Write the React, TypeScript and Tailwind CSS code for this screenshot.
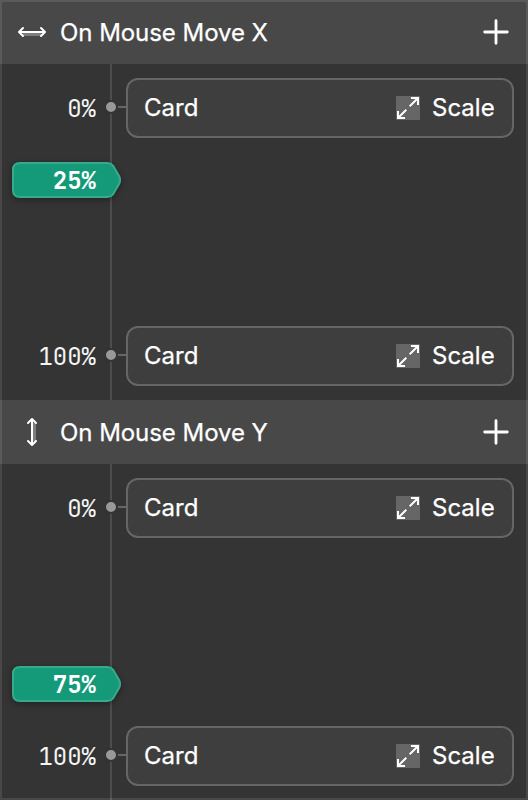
import React from "react";

type Axis = "x" | "y";

const mono = "font-['JetBrains_Mono','Liberation_Mono',monospace]";

function AxisIcon({ axis }: { axis: Axis }) {
  return (
    <svg width="32" height="32" viewBox="0 0 32 32" fill="none">
      {axis === "x" ? (
        <>
          <path d="M7 16h18v4H7z" fill="#7d7d7d" />
          <path d="M3.5 16h25M7 12l-4 4 4 4M25 12l4 4-4 4" stroke="#fff" strokeWidth="2" strokeLinecap="round" strokeLinejoin="round" />
        </>
      ) : (
        <>
          <path d="M16 7v18h4V7z" fill="#7d7d7d" />
          <path d="M16 3.5v25M12 7l4-4 4 4M12 25l4 4 4-4" stroke="#fff" strokeWidth="2" strokeLinecap="round" strokeLinejoin="round" />
        </>
      )}
    </svg>
  );
}

function PlusIcon() {
  return (
    <svg width="28" height="28" viewBox="0 0 28 28" fill="none">
      <path d="M14 2.7v22.6M2.7 14h22.6" stroke="#fff" strokeWidth="2.8" strokeLinecap="round" />
    </svg>
  );
}

function ScaleIcon() {
  return (
    <svg width="24" height="24" viewBox="0 0 24 24" fill="none">
      <rect width="24" height="24" rx="1" fill="#666" />
      <path d="M15 2h7v7M22 2l-8.3 8.3M9 22H2v-7M2 22l8.3-8.3" stroke="#fff" strokeWidth="2" />
    </svg>
  );
}

function Keyframe({ percent }: { percent: string }) {
  return (
    <div className="flex h-15 items-center">
      <div className={`w-24 text-right text-[24px] leading-8 text-[#f5f5f5] ${mono}`}>
        <span className="inline-block translate-y-px">{percent}</span>
      </div>
      <div className="relative ml-2 size-[14px] -translate-y-px rounded-full border-2 border-[#343434] bg-[#999]" />
      <div className="h-0.5 w-2 -translate-y-px bg-[#666]" />
      <div className="flex h-15 w-[388px] items-center rounded-xl border-2 border-[#666] bg-[#3e3e3e] px-4 text-[24px] text-white [-webkit-text-stroke:0.25px_white]">
        <span className="grow">Card</span>
        <ScaleIcon />
        <span className="ml-3 w-[64px]">Scale</span>
      </div>
    </div>
  );
}

function Marker({ percent }: { percent: string }) {
  return (
    <div className="relative ml-3 h-9 w-[109px]">
      <svg width="109" height="36" viewBox="0 0 109 36" fill="none" className="absolute inset-0 drop-shadow-[0_2px_3px_rgba(0,0,0,0.35)]">
        <path
          d="M8 1H95.5C98 1 99.5 1.8 101 3.6L107.2 14.2Q109 18 107.2 21.8L101 32.4C99.5 34.2 98 35 95.5 35H8Q1 35 1 28V8Q1 1 8 1Z"
          fill="#159a79"
          stroke="#37aa8e"
          strokeWidth="2"
        />
      </svg>
      <div className={`relative w-[84px] text-right text-[24px] font-bold leading-9 text-white ${mono}`}>
        <span className="inline-block translate-y-px">{percent}</span>
      </div>
    </div>
  );
}

function Section({ axis, title, marker }: { axis: Axis; title: string; marker: string }) {
  return (
    <section className="h-[400px]">
      <header className="flex h-16 items-center bg-[#484848] pl-4 pr-[18px] text-[24px] text-white">
        <AxisIcon axis={axis} />
        <h2 className="ml-3 grow translate-y-px tracking-[-0.05px] [-webkit-text-stroke:0.25px_white]">{title}</h2>
        <PlusIcon />
      </header>
      <div className="relative flex h-[336px] flex-col pt-3.5">
        <div className="absolute inset-y-0 left-[110px] w-0.5 bg-[#4d4d4d]" />
        <Keyframe percent="0%" />
        <div className={axis === "x" ? "mt-6 mb-32" : "mt-32 mb-6"}>
          <Marker percent={marker} />
        </div>
        <Keyframe percent="100%" />
      </div>
    </section>
  );
}

export default function App() {
  return (
    <main className="relative h-[800px] w-[528px] overflow-hidden bg-[#343434] font-['Inter',sans-serif]">
      <Section axis="x" title="On Mouse Move X" marker="25%" />
      <Section axis="y" title="On Mouse Move Y" marker="75%" />
      <div className="pointer-events-none absolute inset-0 border-2 border-white/10" />
    </main>
  );
}
